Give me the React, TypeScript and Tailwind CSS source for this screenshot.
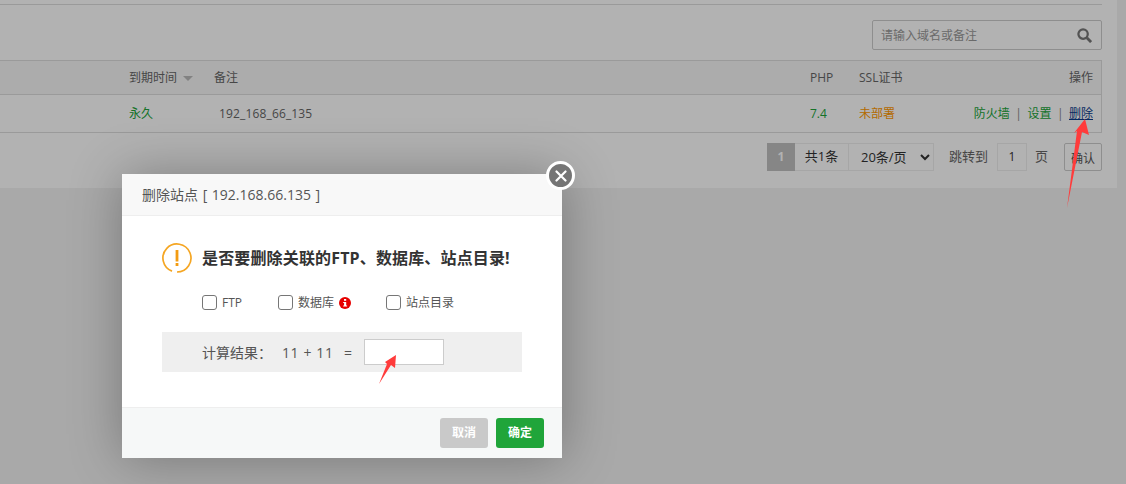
import React from "react";

function Chk({ label, w, info }: { label: string; w: string; info?: boolean }) {
  return (
    <label className={`flex items-center ${w}`}>
      <span className="box-border block h-[15px] w-[15px] rounded-[3px] border border-[#767676] bg-white" />
      <span className="ml-[5px] text-[12px] leading-[15px] text-[#555]">{label}</span>
      {info && (
        <svg viewBox="0 0 12 12" className="ml-[5px] h-3 w-3">
          <circle cx="6" cy="6" r="6" fill="#e60000" />
          <rect x="5" y="2" width="2.2" height="1.8" fill="#fff" />
          <path d="M4.2 5h3v3.6h.9v1H4.2v-1h.9V6h-.9z" fill="#fff" />
        </svg>
      )}
    </label>
  );
}

export default function App() {
  return (
    <div className="relative h-[484px] w-[1126px] overflow-hidden bg-[#f2f2f2] font-['Open_Sans','Noto_Sans_CJK_SC',sans-serif] text-[12px] text-[#666]">
      {/* page panel */}
      <div className="h-[188px] w-[1117px] bg-white">
        <div className="h-[5px] w-[1102px] border-b border-[#ddd]" />
        <div className="flex h-[55px] w-[1102px] items-start justify-end pt-[15px]">
          <div className="flex h-[30px] w-[230px] items-center justify-between rounded-[2px] border border-[#ccc] pl-2 pr-[9px]">
            <span className="mt-[2px] text-[12px] text-[#999]">请输入域名或备注</span>
            <svg viewBox="0 0 16 16" className="h-[15px] w-[15px]" fill="none" stroke="#777" strokeWidth="2.4">
              <circle cx="6.5" cy="6.5" r="5" />
              <path d="M10.5 10.5 15 15" strokeWidth="3" />
            </svg>
          </div>
        </div>
        <div className="w-[1102px] border-y border-r border-[#ddd]">
          <div className="grid h-[34px] grid-cols-[129px_85px_596px_49px_1fr] items-center border-b border-[#ddd] bg-[#f6f6f6] pr-2 text-[#666]">
            <span />
            <span className="flex items-center">
              到期时间
              <span className="ml-[6px] mt-[1px] h-0 w-0 border-x-[5px] border-t-[5px] border-x-transparent border-t-[#bbb]" />
            </span>
            <span>备注</span>
            <span>PHP</span>
            <span className="flex justify-between">
              <span>SSL证书</span>
              <span>操作</span>
            </span>
          </div>
          <div className="grid h-[37px] grid-cols-[129px_85px_596px_49px_1fr] items-center pr-2">
            <span />
            <span className="text-[#20a53a]">永久</span>
            <span className="pl-[5px] tracking-[0.15px]">192_168_66_135</span>
            <span className="text-[#20a53a]">7.4</span>
            <span className="flex justify-between">
              <span className="text-[#ff9900]">未部署</span>
              <span className="flex">
                <span className="text-[#20a53a]">防火墙</span>
                <span className="mx-[5.5px] text-[#888]">|</span>
                <span className="text-[#20a53a]">设置</span>
                <span className="mx-[5.5px] text-[#888]">|</span>
                <span className="text-[#0b3c8c] underline">删除</span>
              </span>
            </span>
          </div>
        </div>
        <div className="flex h-[40px] w-[1102px] items-start justify-end pt-[10px] text-[13px]">
          <span className="flex h-[28px] w-[28px] items-center justify-center bg-[#c0c0c0] text-[12px] font-bold text-white">1</span>
          <span className="box-border flex h-[28px] w-[54px] items-center justify-center border border-l-0 border-[#eee] text-[#333]">共1条</span>
          <select className="box-border h-[28px] w-[85px] border border-l-0 border-[#eee] bg-white pl-[8px] text-[13px] text-[#333]">
            <option>20条/页</option>
          </select>
          <span className="ml-[15px] leading-[26px] text-[#666]">跳转到</span>
          <span className="ml-[9px] box-border flex h-[28px] w-[30px] items-center justify-center border border-[#eee] text-[12px] text-[#333]">1</span>
          <span className="ml-2 leading-[26px] text-[#666]">页</span>
          <span className="ml-4 box-border flex h-[28px] w-[38px] items-center justify-center rounded-[2px] border border-[#ccc] pt-[3px] text-[12px] text-[#555]">确认</span>
        </div>
      </div>

      {/* shade */}
      <div className="absolute inset-0 bg-black/30" />

      {/* dialog */}
      <div className="absolute left-[122px] top-[174px] flex h-[284px] w-[440px] flex-col bg-white shadow-[1px_1px_50px_rgba(0,0,0,0.3)]">
        <div className="flex h-[42px] items-center border-b border-[#eee] bg-[#f8f8f8] pl-5 text-[14px] text-[#555] [word-spacing:1px]">
          删除站点 [ 192.168.66.135 ]
        </div>
        <div className="flex flex-1 flex-col pl-10 pt-[27px]">
          <div className="flex items-center">
            <svg viewBox="0 0 30 30" className="h-[30px] w-[30px]" fill="none">
              <path d="M10 28.1A14 14 0 1 1 15 29" stroke="#f5a623" strokeWidth="1.7" />
              <rect x="13.6" y="7" width="2.8" height="11.5" fill="#f39c12" />
              <rect x="13.6" y="20" width="2.8" height="3" fill="#f39c12" />
            </svg>
            <span className="ml-[10px] text-[16px] font-bold leading-[30px] tracking-[0.15px] text-[#333]">是否要删除关联的FTP、数据库、站点目录!</span>
          </div>
          <div className="ml-10 mt-[22px] flex">
            <Chk label="FTP" w="w-[76px]" />
            <Chk label="数据库" w="w-[108px]" info />
            <Chk label="站点目录" w="w-[90px]" />
          </div>
          <div className="mt-[22px] flex h-[40px] w-[360px] items-center bg-[#efefef] pl-10 text-[14px] text-[#555]">
            <span className="w-[80px]">计算结果：</span>
            <span className="w-[62px] tracking-[0.6px]">11 + 11</span>
            <span className="w-[20px]">=</span>
            <span className="box-border block h-[26px] w-[80px] border border-[#ccc] bg-white" />
          </div>
        </div>
        <div className="flex h-[51px] justify-end gap-2 border-t border-[#eee] bg-[#f6f8f8] pr-[18px] pt-[10px]">
          <span className="flex h-[30px] w-[48px] items-center justify-center rounded-[3px] bg-[#c9c9c9] text-[12px] font-bold text-white">取消</span>
          <span className="flex h-[30px] w-[48px] items-center justify-center rounded-[3px] bg-[#20a53a] text-[12px] font-bold text-white">确定</span>
        </div>
      </div>

      {/* close */}
      <div className="absolute left-[546px] top-[161px] flex h-[29px] w-[29px] items-center justify-center rounded-full border-[3px] border-white bg-[#757575]">
        <svg viewBox="0 0 12 12" className="h-[12px] w-[12px]" stroke="#fff" strokeWidth="2.2" strokeLinecap="round">
          <path d="M1.5 1.5l9 9M10.5 1.5l-9 9" />
        </svg>
      </div>

      {/* annotation arrows */}
      <svg className="absolute left-0 top-0 h-[484px] w-[1126px]" viewBox="0 0 1126 484">
        <path d="M1085 119 1089 135 1082 132 1067 208 1077 131 1074 133z" fill="#ff3b3b" />
        <path d="M396 355 395 368 391 365 379 384 387 364 385 362z" fill="#ff3b3b" />
      </svg>
    </div>
  );
}
